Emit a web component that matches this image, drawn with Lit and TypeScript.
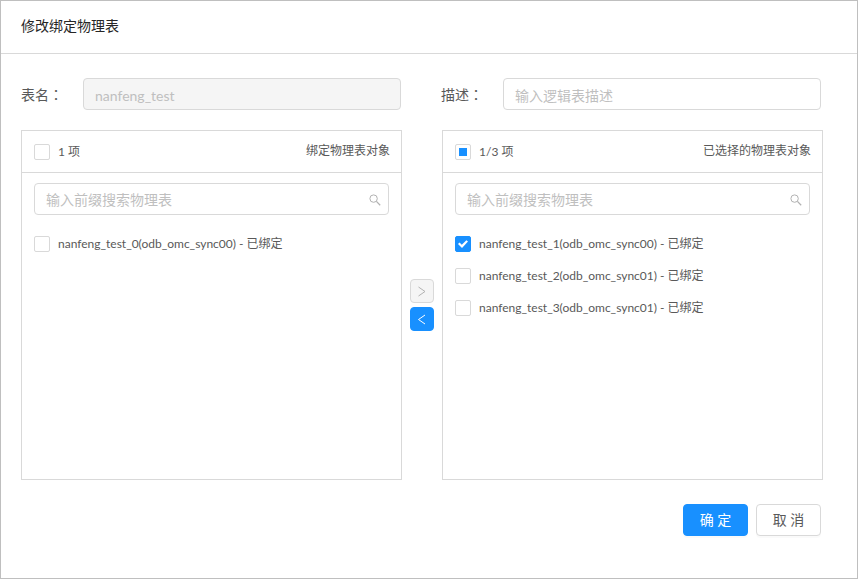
import { LitElement, html, css, svg } from "lit";
import { customElement, property } from "lit/decorators.js";

interface TableItem {
  name: string;
  checked: boolean;
}

const searchIcon = html`<svg class="search-icon" viewBox="0 0 12 12" aria-hidden="true">
  <circle cx="4.6" cy="4.6" r="3.7" fill="none" stroke="currentColor" />
  <path d="M7.4 7.4 L11.2 11.2" stroke="currentColor" stroke-width="1.3" fill="none" />
</svg>`;

const chevron = (points: string) => html`<svg class="chevron" viewBox="0 0 12 12" aria-hidden="true">
  ${svg`<polyline points=${points} fill="none" stroke="currentColor" />`}
</svg>`;

@customElement("transfer-panel")
export class TransferPanel extends LitElement {
  @property() count = "";
  @property() heading = "";
  @property({ type: Boolean }) partial = false;
  @property({ attribute: false }) items: TableItem[] = [];

  static styles = css`
    :host {
      display: block;
      box-sizing: border-box;
      min-width: 0;
      min-height: 350px;
      border: 1px solid #d9d9d9;
      font-size: 12px;
      line-height: 20px;
      color: #595959;
    }
    .head {
      display: flex;
      align-items: flex-start;
      justify-content: space-between;
      padding: 11px 11px 10px 12px;
      border-bottom: 1px solid #d9d9d9;
    }
    .heading {
      line-height: 18px;
    }
    .check {
      display: flex;
      align-items: center;
      gap: 8px;
    }
    .box {
      appearance: none;
      flex: none;
      box-sizing: border-box;
      width: 16px;
      height: 16px;
      margin: 0;
      border: 1px solid #d9d9d9;
      border-radius: 2px;
      background: #fff;
      display: grid;
      place-content: center;
    }
    .box:indeterminate::before {
      content: "";
      width: 8px;
      height: 8px;
      background: #1890ff;
    }
    .box:checked {
      border-color: #1890ff;
      background: #1890ff;
    }
    .box:checked::before {
      content: "";
      width: 10px;
      height: 8px;
      background: #fff;
      clip-path: polygon(0 50%, 15% 31%, 38% 60%, 84% 4%, 100% 20%, 40% 100%);
    }
    .search {
      display: flex;
      align-items: center;
      margin: 10px 12px 13px;
      box-sizing: border-box;
      height: 32px;
      padding: 0 7px 0 11px;
      border: 1px solid #d9d9d9;
      border-radius: 4px;
    }
    .query {
      flex: 1;
      min-width: 0;
      padding: 2px 0 0;
      border: 0;
      outline: 0;
      background: none;
      font: inherit;
      font-size: 14px;
      color: #595959;
    }
    .query::placeholder {
      color: #bfbfbf;
      opacity: 1;
    }
    .search-icon {
      width: 12px;
      height: 12px;
      margin-top: 2px;
      color: #b2b2b2;
    }
    .list {
      margin: 0;
      padding: 0;
      list-style: none;
    }
    .row {
      padding: 6px 12px;
    }
  `;

  render() {
    return html`
      <div class="head">
        <label class="check">
          <input class="box" type="checkbox" .indeterminate=${this.partial} />
          <span>${this.count}</span>
        </label>
        <span class="heading">${this.heading}</span>
      </div>
      <div class="search">
        <input class="query" type="text" placeholder="输入前缀搜索物理表" aria-label="输入前缀搜索物理表" />
        ${searchIcon}
      </div>
      <ul class="list">
        ${this.items.map(
          (item) => html`<li class="row">
            <label class="check">
              <input class="box" type="checkbox" .checked=${item.checked} />
              <span>${item.name}</span>
            </label>
          </li>`
        )}
      </ul>
    `;
  }
}

@customElement("app-root")
export class AppRoot extends LitElement {
  private available: TableItem[] = [
    { name: "nanfeng_test_0(odb_omc_sync00) - 已绑定", checked: false },
  ];
  private selected: TableItem[] = [
    { name: "nanfeng_test_1(odb_omc_sync00) - 已绑定", checked: true },
    { name: "nanfeng_test_2(odb_omc_sync01) - 已绑定", checked: false },
    { name: "nanfeng_test_3(odb_omc_sync01) - 已绑定", checked: false },
  ];

  static styles = css`
    :host {
      display: block;
      box-sizing: border-box;
      min-height: 100vh;
      border: 1px solid #bfbfbf;
      background: #fff;
      font-family: Lato, "Noto Sans CJK SC", sans-serif;
      font-size: 14px;
      line-height: 22px;
      color: #595959;
    }
    .header {
      padding: 14px 20px 16px;
      border-bottom: 1px solid #d9d9d9;
    }
    .title {
      margin: 0;
      font-size: 14px;
      font-weight: 400;
      color: #262626;
    }
    .body {
      padding: 24px 34px 24px 20px;
    }
    .fields {
      display: grid;
      grid-template-columns: 1fr 1fr;
      gap: 40px;
      padding-right: 2px;
      margin-bottom: 20px;
    }
    .field {
      display: flex;
      align-items: center;
    }
    .label {
      width: 62px;
      flex: none;
    }
    .colon {
      font-family: "Noto Sans CJK TC", sans-serif;
    }
    .input {
      flex: 1;
      min-width: 0;
      box-sizing: border-box;
      height: 32px;
      padding: 2px 11px 0;
      border: 1px solid #d9d9d9;
      border-radius: 4px;
      background: #fff;
      font: inherit;
      color: #595959;
    }
    .input::placeholder {
      color: #bfbfbf;
      opacity: 1;
    }
    .input:disabled {
      background: #f5f5f5;
      color: #bfbfbf;
    }
    .transfer {
      display: grid;
      grid-template-columns: 1fr 24px 1fr;
      column-gap: 8px;
    }
    .moves {
      display: flex;
      flex-direction: column;
      justify-content: center;
      gap: 4px;
    }
    .btn {
      display: flex;
      align-items: center;
      justify-content: center;
      box-sizing: border-box;
      height: 32px;
      padding: 0 15px;
      border: 1px solid #d9d9d9;
      border-radius: 4px;
      background: #fff;
      box-shadow: 0 2px 0 rgba(0, 0, 0, 0.02);
      font: inherit;
      color: #595959;
    }
    .small {
      width: 24px;
      height: 24px;
      padding: 0;
      box-shadow: none;
    }
    .small:disabled {
      background: #f5f5f5;
      color: #b2b2b2;
    }
    .primary {
      border-color: #1890ff;
      background: #1890ff;
      color: #fff;
    }
    .action {
      min-width: 65px;
      white-space: pre;
    }
    .chevron {
      width: 12px;
      height: 12px;
    }
    .footer {
      display: flex;
      justify-content: flex-end;
      gap: 8px;
      padding-right: 2px;
      margin-top: 24px;
    }
  `;

  render() {
    return html`
      <header class="header"><h1 class="title">修改绑定物理表</h1></header>
      <main class="body">
        <div class="fields">
          <div class="field">
            <label class="label" for="name">表名<span class="colon">：</span></label>
            <input class="input" id="name" type="text" value="nanfeng_test" disabled />
          </div>
          <div class="field">
            <label class="label" for="desc">描述<span class="colon">：</span></label>
            <input class="input" id="desc" type="text" placeholder="输入逻辑表描述" />
          </div>
        </div>
        <div class="transfer">
          <transfer-panel count="1 项" heading="绑定物理表对象" .items=${this.available}></transfer-panel>
          <div class="moves">
            <button class="btn small" type="button" disabled aria-label="右移">${chevron("2.5,2 9,6.5 2.5,11")}</button>
            <button class="btn small primary" type="button" aria-label="左移">${chevron("9,2 2.5,6.5 9,11")}</button>
          </div>
          <transfer-panel count="1/3 项" heading="已选择的物理表对象" partial .items=${this.selected}></transfer-panel>
        </div>
        <div class="footer">
          <button class="btn action primary" type="button">确 定</button>
          <button class="btn action" type="button">取 消</button>
        </div>
      </main>
    `;
  }
}
